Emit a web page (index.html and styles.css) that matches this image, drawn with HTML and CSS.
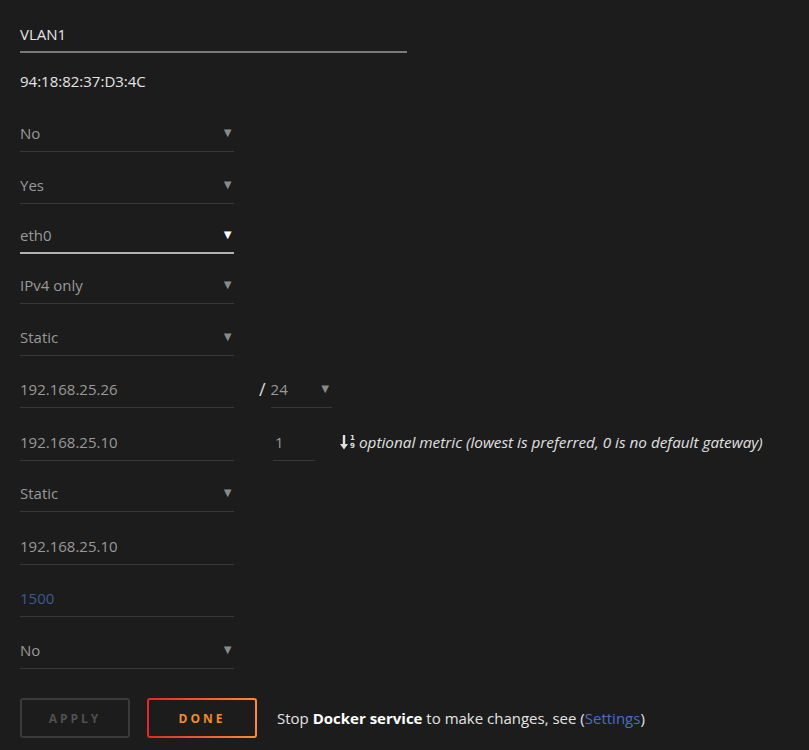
FILE: index.html
```html
<!DOCTYPE html>
<html>
<head>
<meta charset="utf-8">
<link rel="stylesheet" href="styles.css">
</head>
<body>
<div class="form">
  <div class="row row-first"><div class="field wide strong-line text-light">VLAN1</div></div>
  <div class="row row-mac"><div class="field wide no-line text-light">94:18:82:37:D3:4C</div></div>
  <div class="row"><div class="field select">No<span class="caret">▼</span></div></div>
  <div class="row"><div class="field select">Yes<span class="caret">▼</span></div></div>
  <div class="row short"><div class="field select focus">eth0<span class="caret">▼</span></div></div>
  <div class="row short"><div class="field select">IPv4 only<span class="caret">▼</span></div></div>
  <div class="row"><div class="field select">Static<span class="caret">▼</span></div></div>
  <div class="row">
    <div class="field">192.168.25.26</div>
    <span class="slash">/</span>
    <div class="field select mask">24<span class="caret">▼</span></div>
  </div>
  <div class="row tall">
    <div class="field">192.168.25.10</div>
    <div class="field metric">1</div>
    <div class="hint">
      <span class="sorticon"><svg width="8" height="15" viewBox="0 0 8 15"><path d="M4 0v10" stroke="#e0e0e0" stroke-width="2.4" fill="none"/><path d="M0 9h8L4 14.5z" fill="#e0e0e0"/></svg><span class="frac"><span>1</span><span>9</span></span></span><em>optional metric (lowest is preferred, 0 is no default gateway)</em>
    </div>
  </div>
  <div class="row short51"><div class="field select">Static<span class="caret">▼</span></div></div>
  <div class="row tall"><div class="field">192.168.25.10</div></div>
  <div class="row"><div class="field placeholder">1500</div></div>
  <div class="row"><div class="field select">No<span class="caret">▼</span></div></div>
  <div class="actions">
    <button class="btn apply">APPLY</button>
    <button class="btn done"><span>DONE</span></button>
    <p class="note">Stop <b>Docker service</b> to make changes, see (<a>Settings</a>)</p>
  </div>
</div>
</body>
</html>
```
FILE: styles.css
```css
html, body {
  margin: 0;
  background: #1c1c1c;
  height: 100%;
}
body {
  font-family: "Open Sans", "Noto Sans", sans-serif;
  font-size: 15px;
  color: #999;
}
.form {
  padding: 0 20px;
}
.row {
  height: 52px;
  display: flex;
  align-items: flex-end;
}
.row.short { height: 50px; }
.row.short51 { height: 51px; }
.row.tall { height: 53px; }
.row-first { height: 53px; }
.row-mac { height: 47px; }
.field {
  box-sizing: border-box;
  width: 214px;
  height: 36px;
  line-height: 35px;
  border-bottom: 1px solid #383838;
  position: relative;
  white-space: nowrap;
}
.field.wide { width: 387px; }
.strong-line { border-bottom: 2px solid #7a7a7a; line-height: 34px; }
.no-line { border-bottom-color: transparent; }
.text-light { color: #e4e4e4; }
.focus { border-bottom: 2px solid #b0b0b0; line-height: 34px; }
.caret {
  position: absolute;
  right: 0;
  top: -1px;
  font-size: 13px;
  color: #8a8a8a;
}
.focus .caret { color: #fff; }
.slash {
  color: #ddd;
  font-size: 18px;
  line-height: 36px;
  align-self: flex-end;
  margin: 0 5px 0 25px;
  padding-bottom: 1px;
}
.mask { width: 61px; }
.metric {
  width: 42px;
  margin-left: 39px;
  padding-left: 2px;
}
.hint {
  height: 36px;
  line-height: 36px;
  margin-left: 25px;
  color: #e0e0e0;
  display: flex;
  align-items: center;
  padding-bottom: 1px;
  white-space: nowrap;
}
.hint em { font-size: 15.3px; }
.sorticon {
  display: inline-flex;
  align-items: center;
  margin-right: 3px;
}
.frac {
  display: inline-flex;
  flex-direction: column;
  align-items: center;
  min-width: 7px;
  font-size: 7px;
  line-height: 8px;
  font-weight: 700;
  margin-left: 1px;
  color: #e0e0e0;
  font-family: "DejaVu Sans", sans-serif;
}
.frac span { display: block; height: 8px; }
.placeholder { color: #3c5a94; }
.actions {
  display: flex;
  align-items: center;
  margin-top: 29px;
}
.btn {
  box-sizing: border-box;
  width: 110px;
  height: 40px;
  background: transparent;
  font-family: "Open Sans", sans-serif;
  font-size: 12px;
  font-weight: 700;
  letter-spacing: 3px;
  border-radius: 3px;
  padding: 0;
  margin: 0 17px 0 0;
}
.apply {
  border: 2px solid #3a3a3a;
  color: #505050;
}
.done {
  border: 2px solid transparent;
  background: linear-gradient(#1c1c1c, #1c1c1c) padding-box, linear-gradient(90deg, #e22828, #ff8c2f) border-box;
  color: #f28b2b;
}
.note {
  margin: 0 0 0 3px;
  color: #e4e4e4;
  font-size: 15px;
}
.note b { color: #fff; }
.note a { color: #4a6fc0; }
```
